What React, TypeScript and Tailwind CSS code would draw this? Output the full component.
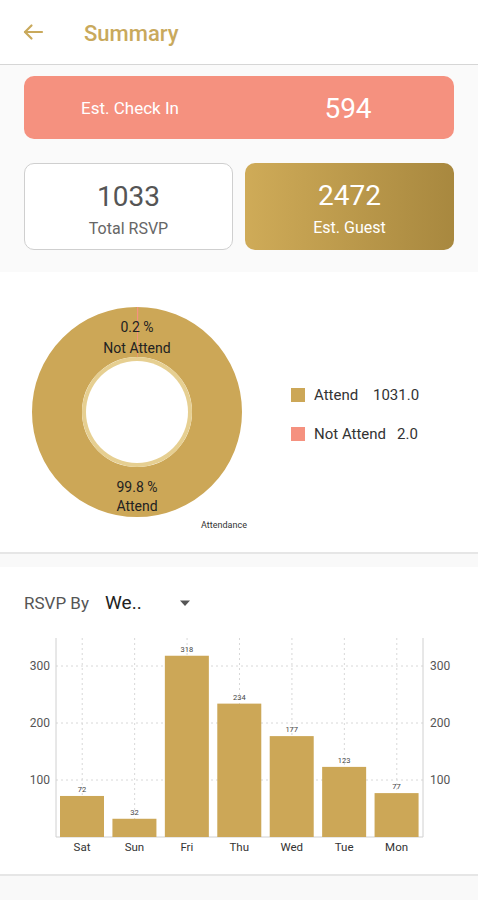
import React from "react";

const GOLD = "#cca757";

const WEEK = [
  { day: "Sat", value: 72 },
  { day: "Sun", value: 32 },
  { day: "Fri", value: 318 },
  { day: "Thu", value: 234 },
  { day: "Wed", value: 177 },
  { day: "Tue", value: 123 },
  { day: "Mon", value: 77 },
];

function Header() {
  return (
    <header className="flex h-[65px] items-center border-b border-[#d6d6d6] bg-white">
      <div className="flex w-[84px] items-center pl-[22px]">
        <svg width="22" height="18" viewBox="0 0 22 18" fill="none" stroke="#c9a95c" strokeWidth="2.2" strokeLinecap="round" strokeLinejoin="round">
          <path d="M20 9H3" />
          <path d="M9.5 2.5L3 9l6.5 6.5" />
        </svg>
      </div>
      <h1 className="mt-[2px] text-[22px] font-medium text-[#c9a95c]">Summary</h1>
    </header>
  );
}

function StatCards() {
  return (
    <section className="bg-[#fafafa] px-6 pb-[22px] pt-[11px]">
      <div className="flex h-[63px] items-center rounded-[10px] bg-[#f5917f] pt-[3px] text-white">
        <div className="flex-1 pr-[6px] text-center text-[17px]">Est. Check In</div>
        <div className="flex-1 text-center text-[28px]">594</div>
      </div>
      <div className="mt-6 grid h-[87px] grid-cols-2 gap-3">
        <div className="flex flex-col items-center rounded-[10px] border border-[#cfcfcf] bg-white pt-[15px] text-[#555]">
          <div className="text-[28px] leading-[36px]">1033</div>
          <div className="mt-[3px] text-[16px] leading-[22px] text-[#666]">Total RSVP</div>
        </div>
        <div className="flex flex-col items-center rounded-[10px] bg-gradient-to-r from-[#cfab58] to-[#a8883f] pt-[15px] text-white">
          <div className="text-[28px] leading-[36px]">2472</div>
          <div className="mt-[3px] text-[16px] leading-[22px]">Est. Guest</div>
        </div>
      </div>
    </section>
  );
}

function Donut() {
  const cx = 105;
  const cy = 105;
  const r = 80;
  const c = 2 * Math.PI * r;
  const notAttend = 0.002 * c;
  return (
    <svg width="230" height="225" viewBox="0 0 230 225" className="shrink-0">
      <circle cx={cx} cy={cy} r={r} fill="none" stroke={GOLD} strokeWidth="50" />
      <circle
        cx={cx}
        cy={cy}
        r={r}
        fill="none"
        stroke="#f5917f"
        strokeWidth="50"
        strokeDasharray={`${notAttend} ${c}`}
        transform={`rotate(-90 ${cx} ${cy})`}
      />
      <circle cx={cx} cy={cy} r="55" fill="#e6cf91" />
      <circle cx={cx} cy={cy} r="51" fill="#ffffff" />
      <g fontFamily="Roboto, sans-serif" fontSize="14" fill="#222" textAnchor="middle">
        <text x={cx} y="25">0.2 %</text>
        <text x={cx} y="46">Not Attend</text>
        <text x={cx} y="185">99.8 %</text>
        <text x={cx} y="204">Attend</text>
      </g>
      <text x="192" y="221" textAnchor="middle" fontFamily="Roboto, sans-serif" fontSize="9" fill="#333">
        Attendance
      </text>
    </svg>
  );
}

function AttendanceChart() {
  return (
    <section className="flex h-[280px] items-start bg-white pl-8 pt-[35px]">
      <Donut />
      <div className="ml-[29px] mt-[77px] flex flex-col gap-[17px] text-[15px] leading-[22px] text-[#333]">
        <div className="flex items-center">
          <span className="h-[14px] w-[14px] bg-[#cca757]" />
          <span className="ml-[9px] w-[59px]">Attend</span>
          <span>1031.0</span>
        </div>
        <div className="flex items-center">
          <span className="h-[14px] w-[14px] bg-[#f5917f]" />
          <span className="ml-[9px] w-[83px]">Not Attend</span>
          <span>2.0</span>
        </div>
      </div>
    </section>
  );
}

function Divider() {
  return <div className="h-[15px] border-t-2 border-[#e6e6e6] bg-[#f9f9f9]" />;
}

function BarChart() {
  const left = 56;
  const right = 423;
  const base = 207;
  const scale = 0.57;
  const slot = (right - left) / WEEK.length;
  const ticks = [100, 200, 300];
  return (
    <svg width="478" height="228" viewBox="0 0 478 228" fontFamily="Roboto, sans-serif">
      {ticks.map((t) => (
        <line key={t} x1={left} x2={right} y1={base - t * scale} y2={base - t * scale} stroke="#d8d8d8" strokeDasharray="2 3" />
      ))}
      {WEEK.map((d, i) => (
        <line key={d.day} x1={left + slot * (i + 0.5)} x2={left + slot * (i + 0.5)} y1="8" y2={base} stroke="#d8d8d8" strokeDasharray="2 3" />
      ))}
      <line x1={left} x2={left} y1="8" y2={base} stroke="#d0d0d0" />
      <line x1={right} x2={right} y1="8" y2={base} stroke="#d0d0d0" />
      <line x1={left} x2={right} y1={base} y2={base} stroke="#d0d0d0" />
      {WEEK.map((d, i) => {
        const h = d.value * scale;
        const x = left + slot * i + 4;
        return (
          <g key={d.day}>
            <rect x={x} y={base - h} width="44" height={h} fill={GOLD} />
            <text x={x + 22} y={base - h - 4} textAnchor="middle" fontSize="7.5" fill="#444">
              {d.value}
            </text>
            <text x={x + 22} y="221" textAnchor="middle" fontSize="11.5" fill="#333">
              {d.day}
            </text>
          </g>
        );
      })}
      {ticks.map((t) => (
        <g key={t} fontSize="12" fill="#555">
          <text x="50" y={base - t * scale + 4} textAnchor="end">{t}</text>
          <text x="430" y={base - t * scale + 4}>{t}</text>
        </g>
      ))}
    </svg>
  );
}

function RsvpSection() {
  return (
    <section className="bg-white pt-[22px]">
      <div className="flex items-center px-6">
        <span className="text-[17px] text-[#555]">RSVP By</span>
        <span className="ml-[16px] w-[74px] text-[19px] text-[#222]">We..</span>
        <svg width="12" height="7" viewBox="0 0 12 7">
          <path d="M1 0.5h10L6 6z" fill="#555" />
        </svg>
      </div>
      <div className="mt-[12px] pb-[16px]">
        <BarChart />
      </div>
    </section>
  );
}

export default function App() {
  return (
    <div className="min-h-[900px] w-[478px] bg-[#f9f9f9] font-['Roboto',sans-serif]">
      <Header />
      <StatCards />
      <AttendanceChart />
      <Divider />
      <RsvpSection />
      <Divider />
    </div>
  );
}
